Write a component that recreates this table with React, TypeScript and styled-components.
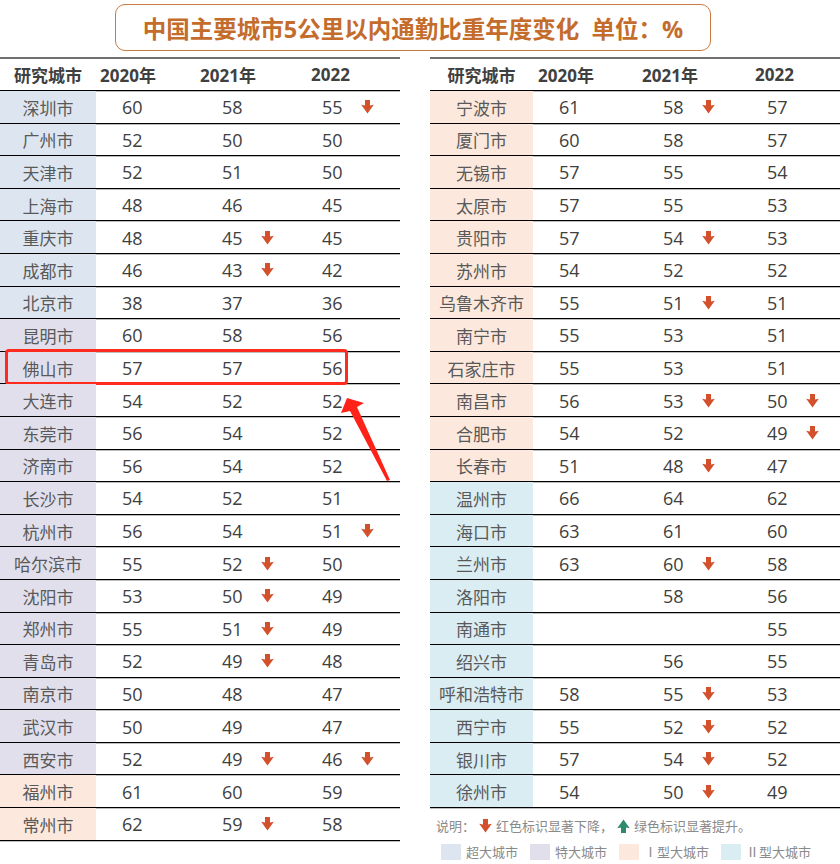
import styled, { createGlobalStyle } from "styled-components";

type Tier = "mega" | "super" | "big1" | "big2";
type Cell = { v?: number; down?: boolean };
type City = { name: string; tier: Tier; y20: Cell; y21: Cell; y22: Cell; mark?: boolean };

const tierColor: Record<Tier, string> = {
  mega: "#dde6f0",
  super: "#e2dfec",
  big1: "#fce8dc",
  big2: "#d9edf3",
};

// 行数据：名称, 类型, 2020, 2021, 2022（"d" 表示显著下降）
const c = (name: string, tier: Tier, a: string, b: string, d: string, mark?: boolean): City => {
  const parse = (s: string): Cell => (s === "" ? {} : { v: parseInt(s), down: s.endsWith("d") });
  return { name, tier, y20: parse(a), y21: parse(b), y22: parse(d), mark };
};

const leftRows: City[] = [
  c("深圳市", "mega", "60", "58", "55d"),
  c("广州市", "mega", "52", "50", "50"),
  c("天津市", "mega", "52", "51", "50"),
  c("上海市", "mega", "48", "46", "45"),
  c("重庆市", "mega", "48", "45d", "45"),
  c("成都市", "mega", "46", "43d", "42"),
  c("北京市", "mega", "38", "37", "36"),
  c("昆明市", "super", "60", "58", "56"),
  c("佛山市", "super", "57", "57", "56", true),
  c("大连市", "super", "54", "52", "52"),
  c("东莞市", "super", "56", "54", "52"),
  c("济南市", "super", "56", "54", "52"),
  c("长沙市", "super", "54", "52", "51"),
  c("杭州市", "super", "56", "54", "51d"),
  c("哈尔滨市", "super", "55", "52d", "50"),
  c("沈阳市", "super", "53", "50d", "49"),
  c("郑州市", "super", "55", "51d", "49"),
  c("青岛市", "super", "52", "49d", "48"),
  c("南京市", "super", "50", "48", "47"),
  c("武汉市", "super", "50", "49", "47"),
  c("西安市", "super", "52", "49d", "46d"),
  c("福州市", "big1", "61", "60", "59"),
  c("常州市", "big1", "62", "59d", "58"),
];

const rightRows: City[] = [
  c("宁波市", "big1", "61", "58d", "57"),
  c("厦门市", "big1", "60", "58", "57"),
  c("无锡市", "big1", "57", "55", "54"),
  c("太原市", "big1", "57", "55", "53"),
  c("贵阳市", "big1", "57", "54d", "53"),
  c("苏州市", "big1", "54", "52", "52"),
  c("乌鲁木齐市", "big1", "55", "51d", "51"),
  c("南宁市", "big1", "55", "53", "51"),
  c("石家庄市", "big1", "55", "53", "51"),
  c("南昌市", "big1", "56", "53d", "50d"),
  c("合肥市", "big1", "54", "52", "49d"),
  c("长春市", "big1", "51", "48d", "47"),
  c("温州市", "big2", "66", "64", "62"),
  c("海口市", "big2", "63", "61", "60"),
  c("兰州市", "big2", "63", "60d", "58"),
  c("洛阳市", "big2", "", "58", "56"),
  c("南通市", "big2", "", "", "55"),
  c("绍兴市", "big2", "", "56", "55"),
  c("呼和浩特市", "big2", "58", "55d", "53"),
  c("西宁市", "big2", "55", "52d", "52"),
  c("银川市", "big2", "57", "54d", "52"),
  c("徐州市", "big2", "54", "50d", "49"),
];

const GlobalStyle = createGlobalStyle`
  body {
    margin: 0;
    background: #fff;
    font-family: "Open Sans", "Noto Sans CJK SC", sans-serif;
  }
`;

const Page = styled.div`
  position: relative;
  width: 840px;
  height: 864px;
  overflow: hidden;
`;

const TitleBox = styled.div`
  box-sizing: border-box;
  margin: 4px 0 0 115px;
  width: 596px;
  height: 47px;
  border: 1.5px solid #c97b42;
  border-radius: 10px;
  display: flex;
  align-items: center;
  justify-content: center;
  font-size: 23.5px;
  font-weight: 700;
  color: #c46c2c;
  white-space: pre;
`;

const Tables = styled.div`
  display: flex;
  margin-top: 6px;
`;

const Side = styled.div<{ $left: number; $width: number }>`
  margin-left: ${(p) => p.$left}px;
  width: ${(p) => p.$width}px;
`;

const HeadRow = styled.div<{ $cols: string }>`
  display: grid;
  grid-template-columns: ${(p) => p.$cols};
  height: 31px;
  align-items: center;
  border-top: 2px solid #707070;
  border-bottom: 1px solid #000;
  box-shadow: 0 1px 0 #bdbdbd;
  font-size: 17px;
  font-weight: 700;
  color: #404040;
`;

const HeadCell = styled.div<{ $indent: number; $center?: boolean }>`
  padding-left: ${(p) => p.$indent}px;
  text-align: ${(p) => (p.$center ? "center" : "left")};
`;

const Row = styled.div<{ $cols: string }>`
  position: relative;
  display: grid;
  grid-template-columns: ${(p) => p.$cols};
  height: 31.6px;
  border-bottom: 1px solid #000;
  box-shadow: 0 1px 0 #bdbdbd;
`;

const CityCell = styled.div<{ $tier: Tier }>`
  background: ${(p) => tierColor[p.$tier]};
  display: flex;
  align-items: center;
  justify-content: center;
  font-size: 17px;
  color: #595959;
  padding-top: 1px;
`;

const ValueCell = styled.div`
  display: flex;
  align-items: center;
  padding-left: 26px;
  padding-top: 1px;
  font-size: 18px;
  color: #404040;
`;

const Num = styled.span`
  display: inline-block;
  width: 39px;
`;

const Highlight = styled.div`
  position: absolute;
  left: 5px;
  right: 52px;
  top: -3px;
  bottom: -2px;
  border: 3px solid #ff2b1e;
  border-radius: 4px;
`;

const Pointer = styled.svg`
  position: absolute;
  left: 336px;
  top: 392px;
`;

const Note = styled.div`
  margin-top: 9px;
  padding-left: 6px;
  display: flex;
  align-items: center;
  font-size: 13px;
  line-height: 18px;
  color: #8a8a8a;
  gap: 4px;
`;

const Legend = styled.div`
  margin-top: 7px;
  padding-left: 11px;
  display: flex;
  gap: 12px;
  font-size: 13px;
  color: #8a8a8a;
`;

const LegendItem = styled.div`
  display: flex;
  align-items: center;
  gap: 5px;
`;

const Swatch = styled.span<{ $tier: Tier }>`
  display: inline-block;
  width: 20px;
  height: 16px;
  background: ${(p) => tierColor[p.$tier]};
`;

function DownArrow() {
  return (
    <svg width="13" height="14" viewBox="0 0 13 14">
      <polygon points="4,0 9,0 9,5.5 12.8,4.8 6.5,13.6 0.2,4.8 4,5.5" fill="#d2502b" />
    </svg>
  );
}

function UpArrow() {
  return (
    <svg width="13" height="14" viewBox="0 0 13 14">
      <polygon points="4,14 9,14 9,8.5 12.8,9.2 6.5,0.4 0.2,9.2 4,8.5" fill="#2e8a6c" />
    </svg>
  );
}

function Value({ cell }: { cell: Cell }) {
  return (
    <ValueCell>
      <Num>{cell.v ?? ""}</Num>
      {cell.down && <DownArrow />}
    </ValueCell>
  );
}

function CityTable({ rows, cols, indents }: { rows: City[]; cols: string; indents: number[] }) {
  return (
    <>
      <HeadRow $cols={cols}>
        <HeadCell $indent={0} $center>研究城市</HeadCell>
        <HeadCell $indent={indents[0]}>2020年</HeadCell>
        <HeadCell $indent={indents[1]}>2021年</HeadCell>
        <HeadCell $indent={indents[2]}>2022</HeadCell>
      </HeadRow>
      {rows.map((r) => (
        <Row key={r.name} $cols={cols}>
          <CityCell $tier={r.tier}>{r.name}</CityCell>
          <Value cell={r.y20} />
          <Value cell={r.y21} />
          <Value cell={r.y22} />
          {r.mark && <Highlight />}
        </Row>
      ))}
    </>
  );
}

export default function App() {
  return (
    <Page>
      <GlobalStyle />
      <TitleBox>{"中国主要城市5公里以内通勤比重年度变化  单位：%"}</TitleBox>
      <Tables>
        <Side $left={0} $width={400}>
          <CityTable rows={leftRows} cols="96px 100px 100px 1fr" indents={[4, 4, 15]} />
        </Side>
        <Side $left={30} $width={410}>
          <CityTable rows={rightRows} cols="103px 104px 104px 1fr" indents={[5, 5, 14]} />
          <Note>
            说明：<DownArrow /> 红色标识显著下降，<UpArrow /> 绿色标识显著提升。
          </Note>
          <Legend>
            <LegendItem><Swatch $tier="mega" />超大城市</LegendItem>
            <LegendItem><Swatch $tier="super" />特大城市</LegendItem>
            <LegendItem><Swatch $tier="big1" />Ⅰ型大城市</LegendItem>
            <LegendItem><Swatch $tier="big2" />Ⅱ型大城市</LegendItem>
          </Legend>
        </Side>
      </Tables>
      <Pointer width="60" height="95" viewBox="336 392 60 95">
        <polygon points="347,398 364,403 357,407 390,480 387,481 350,411 341,413" fill="#ff2218" />
      </Pointer>
    </Page>
  );
}
